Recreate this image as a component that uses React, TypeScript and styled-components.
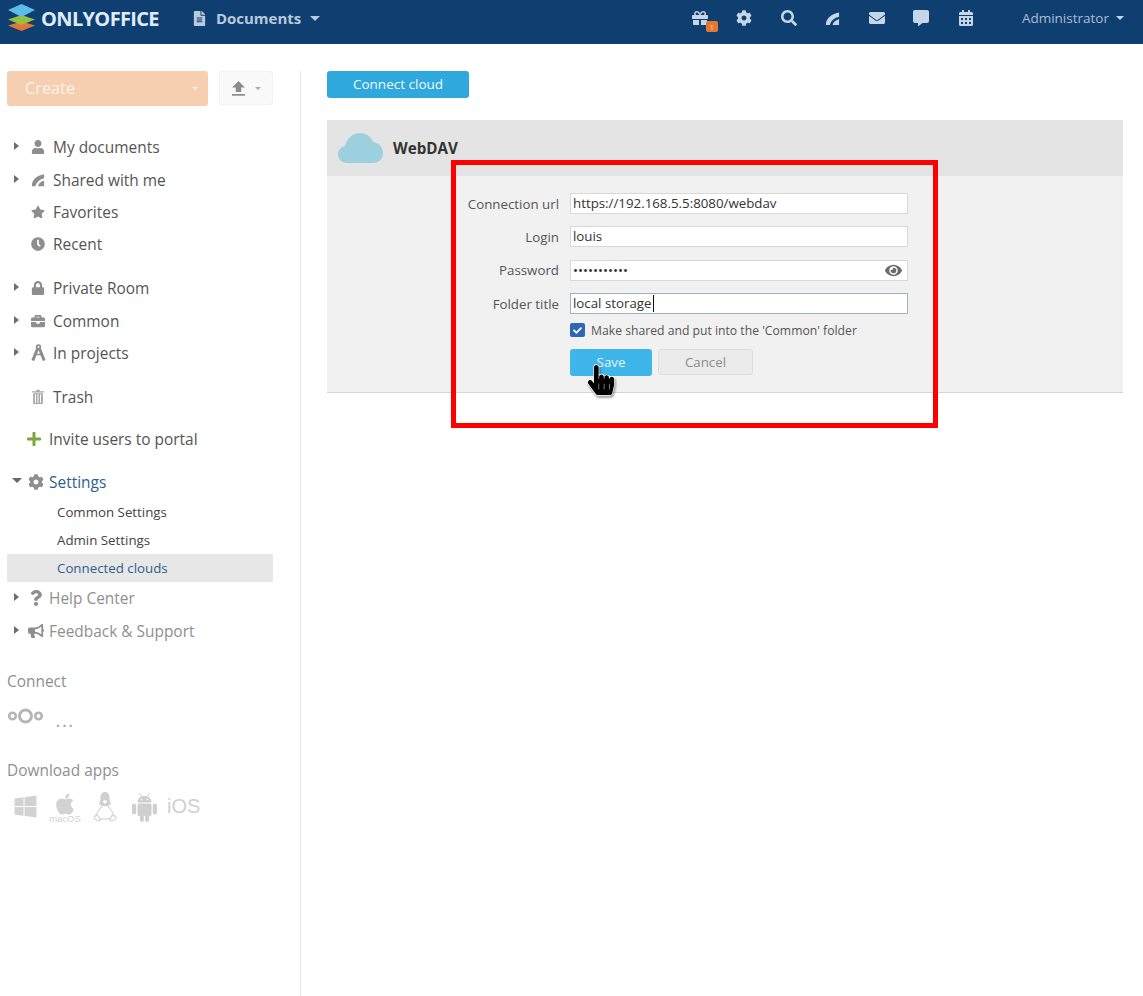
import React from "react";
import styled, { createGlobalStyle } from "styled-components";
import {
  FaGift, FaCog, FaSearch, FaEnvelope, FaCommentAlt, FaCalendarAlt, FaUser, FaStar, FaClock, FaLock,
  FaBriefcase, FaPlus, FaQuestion, FaBullhorn, FaWindows, FaApple, FaEye, FaFileAlt,
  FaCheck, FaHandPointer,
} from "react-icons/fa";

const Global = createGlobalStyle`
  html, body { margin: 0; padding: 0; background: #fff; }
  body { font-family: "Open Sans", "Liberation Sans", sans-serif; overflow: hidden; }
  * { box-sizing: border-box; }
`;

const Page = styled.div`
  position: relative;
  width: 1143px;
  height: 996px;
  display: flex;
  flex-direction: column;
  overflow: hidden;
`;

const Header = styled.header`
  height: 44px;
  flex: none;
  background: #0f3f71;
  display: flex;
  align-items: center;
  padding: 0 19px 0 7px;
`;
const LogoMark = styled.svg`
  width: 29px;
  height: 27px;
  flex: none;
  margin-top: -9px;
`;
const Brand = styled.span`
  margin: -8px 0 0 5px;
  font-size: 20px;
  font-weight: 700;
  letter-spacing: -0.65px;
  color: #dfecf8;
`;
const ModuleMenu = styled.div`
  display: flex;
  align-items: center;
  margin: -8px 0 0 33px;
  color: #b9cadd;
  font-size: 15px;
  font-weight: 700;
  gap: 9px;
  svg { font-size: 15px; }
`;
const DownArrow = styled.i<{ $size?: number; $color?: string }>`
  display: inline-block;
  width: 0;
  height: 0;
  border-left: ${p => p.$size ?? 5}px solid transparent;
  border-right: ${p => p.$size ?? 5}px solid transparent;
  border-top: ${p => p.$size ?? 5}px solid ${p => p.$color ?? "#b9cadd"};
`;
const HeaderIcons = styled.nav`
  margin-left: auto;
  display: flex;
  align-items: center;
  margin-top: -8px;
`;
const HeaderIcon = styled.span`
  position: relative;
  width: 44.3px;
  display: flex;
  justify-content: center;
  color: #c5d6e8;
  font-size: 16px;
`;
const Badge = styled.b`
  position: absolute;
  left: 28px;
  top: 11px;
  width: 12px;
  height: 11px;
  background: #e8772e;
  border-radius: 2px;
  color: #fbd9bd;
  font-size: 8px;
  line-height: 11px;
  font-weight: 400;
  text-align: center;
`;
const UserMenu = styled.div`
  margin-left: 34px;
  display: flex;
  align-items: center;
  gap: 7px;
  font-size: 13.5px;
  color: #a9bdd3;
`;

const Body = styled.div`
  flex: 1;
  display: flex;
  margin-top: 27px;
`;
const Sidebar = styled.aside`
  width: 301px;
  flex: none;
  border-right: 1px solid #e6e6e6;
  padding-left: 7px;
  padding-right: 27px;
`;
const ActionRow = styled.div`
  display: flex;
  gap: 11px;
  margin-bottom: 25px;
`;
const CreateButton = styled.div`
  width: 201px;
  height: 35px;
  background: #f6cfb1;
  border-radius: 3px;
  color: #fdf3ea;
  font-size: 16.3px;
  line-height: 33px;
  padding: 0 10px 0 18px;
  display: flex;
  align-items: center;
  justify-content: space-between;
`;
const UploadButton = styled.div`
  width: 54px;
  height: 34px;
  background: #f9f9f9;
  border: 1px solid #f2f2f2;
  border-radius: 3px;
  display: flex;
  align-items: center;
  justify-content: center;
  gap: 9px;
  svg { display: block; }
`;
const Group = styled.div<{ $gap?: number }>`
  margin-bottom: ${p => p.$gap ?? 0}px;
`;
const Row = styled.div<{ $dim?: boolean; $active?: boolean; $after?: number }>`
  height: 32.4px;
  margin-bottom: ${p => p.$after ?? 0}px;
  display: flex;
  align-items: center;
  font-size: 15.45px;
  color: ${p => (p.$active ? "#2f5f8f" : p.$dim ? "#8f8f8f" : "#555")};
`;
const CaretSlot = styled.span`
  width: 18px;
  flex: none;
  display: flex;
  padding-left: 7px;
`;
const RightCaret = styled.i`
  width: 0;
  height: 0;
  border-top: 4px solid transparent;
  border-bottom: 4px solid transparent;
  border-left: 5px solid #6e6e6e;
  margin-top: -2px;
`;
const OpenCaret = styled.i`
  width: 0;
  height: 0;
  margin: -3px 0 0 -2px;
  border-left: 5px solid transparent;
  border-right: 5px solid transparent;
  border-top: 5px solid #666;
`;
const IconSlot = styled.span<{ $compact?: boolean }>`
  width: ${p => (p.$compact ? 21 : 26)}px;
  margin-right: ${p => (p.$compact ? 3 : 2)}px;
  flex: none;
  display: flex;
  justify-content: center;
  font-size: ${p => (p.$compact ? 16 : 14)}px;
  color: #8e8e8e;
`;
const PlusSlot = styled.span`
  width: 17px;
  margin-right: 7px;
  flex: none;
  display: flex;
  justify-content: center;
  font-size: 16px;
  color: #7aa63a;
`;
const SubRow = styled.div<{ $active?: boolean }>`
  height: 28px;
  padding-left: 50px;
  font-size: 13.3px;
  line-height: 28px;
  color: ${p => (p.$active ? "#2f5f8f" : "#444")};
  background: ${p => (p.$active ? "#e7e7e7" : "transparent")};
`;
const SectionTitle = styled.div`
  font-size: 15.45px;
  line-height: 20px;
  color: #8f8f8f;
`;
const ConnectRow = styled.div`
  display: flex;
  align-items: flex-start;
  height: 53px;
  margin-top: 16px;
  gap: 13px;
  padding-left: 1px;
`;
const Dots = styled.span`
  color: #aaa;
  font-size: 14px;
  font-weight: 700;
  letter-spacing: 2.4px;
  line-height: 16px;
  margin-top: 7px;
`;
const AppsRow = styled.div`
  display: flex;
  align-items: center;
  margin: 10px 0 0 6px;
  height: 34px;
  color: #d2d2d2;
  font-size: 25px;
  gap: 15px;
`;
const AppleMark = styled.span`
  display: flex;
  flex-direction: column;
  align-items: center;
  font-size: 24px;
  width: 32px;
  margin: 1px -3px 0 -4px;
`;
const MacLabel = styled.span`
  font-family: "Liberation Sans", sans-serif;
  font-size: 9.5px;
  line-height: 9px;
  margin-top: -2px;
`;
const IosLabel = styled.span`
  font-family: "Liberation Sans", sans-serif;
  font-size: 20px;
  color: #d0d0d0;
  margin-left: -5px;
`;

const Content = styled.main`
  flex: 1;
  padding: 0 20px 0 26px;
`;
const ConnectButton = styled.div`
  width: 142px;
  height: 27px;
  background: #2fa8dd;
  border-radius: 3px;
  color: #eef8fd;
  font-size: 13.5px;
  line-height: 26px;
  text-align: center;
  margin-bottom: 22px;
`;
const Panel = styled.section`
  background: #f1f1f1;
  border-bottom: 1px solid #d4d4d4;
  height: 273px;
`;
const PanelHead = styled.div`
  height: 56px;
  background: #e4e4e4;
  display: flex;
  align-items: center;
  padding-left: 11px;
  gap: 10px;
`;
const PanelTitle = styled.h2`
  margin: 0;
  font-size: 15.2px;
  font-weight: 700;
  color: #333;
`;
const Form = styled.div`
  padding-top: 17px;
  margin-left: 140px;
  width: 441px;
`;
const FormRow = styled.div`
  display: grid;
  grid-template-columns: 92px 338px;
  column-gap: 11px;
  align-items: center;
  height: 21px;
  margin-bottom: 12.35px;
`;
const Label = styled.label`
  font-size: 13.3px;
  color: #555;
  text-align: right;
  white-space: nowrap;
`;
const Field = styled.div<{ $focused?: boolean }>`
  position: relative;
  height: 21px;
  background: #fff;
  border: 1px solid ${p => (p.$focused ? "#9db4c4" : "#d8d8d8")};
  padding: 0 2px;
  font-size: 13.3px;
  line-height: 19px;
  color: #333;
  display: flex;
  align-items: center;
`;
const TextCaret = styled.i`
  width: 1.5px;
  height: 17px;
  background: #111;
  margin-left: 1px;
`;
const EyeIcon = styled.span`
  margin-left: auto;
  margin-right: 3px;
  display: flex;
  color: #6b6b6b;
  font-size: 17px;
`;
const Checks = styled.div`
  display: flex;
  align-items: center;
  gap: 6px;
  margin: -3px 0 0 103px;
  font-size: 12.2px;
  color: #555;
  height: 14px;
`;
const CheckBox = styled.span`
  width: 15px;
  height: 14px;
  border-radius: 2px;
  background: #2e67b5;
  color: #fff;
  font-size: 9px;
  display: flex;
  align-items: center;
  justify-content: center;
`;
const Buttons = styled.div`
  display: flex;
  gap: 6px;
  margin: 12px 0 0 103px;
`;
const SaveButton = styled.div`
  position: relative;
  width: 82px;
  height: 27px;
  background: #3eb6e9;
  border-radius: 3px;
  color: #e3f4fb;
  font-size: 13.3px;
  line-height: 27px;
  text-align: center;
`;
const CancelButton = styled.div`
  width: 95px;
  height: 26px;
  background: #ebebeb;
  border: 1px solid #dcdcdc;
  border-radius: 3px;
  color: #8b8b8b;
  font-size: 13.3px;
  line-height: 24px;
  text-align: center;
`;
const HandCursor = styled.span`
  position: absolute;
  left: 16px;
  top: 16px;
  display: flex;
  font-size: 30px;
  color: #000;
  filter: drop-shadow(1px 2px 1px rgba(0, 0, 0, 0.4));
  svg { stroke: #fff; stroke-width: 22px; paint-order: stroke; overflow: visible; }
`;
const RedFrame = styled.div`
  position: absolute;
  left: 451px;
  top: 160px;
  width: 487px;
  height: 268px;
  border: 5px solid #ff0000;
  pointer-events: none;
`;

const FeedIcon = ({ size = 16 }: { size?: number }) => (
  <svg width={size} height={size} viewBox="0 0 16 16" fill="currentColor">
    <path d="M1 15C1 8 6 3 15 1.5V6C10 7 6.5 10 5 15Z" />
    <path d="M8 15C8.5 12 11 10 15 8.5V15Z" />
  </svg>
);
const CompassIcon = () => (
  <svg width="15" height="17" viewBox="0 0 15 17" fill="none" stroke="currentColor">
    <circle cx="7.5" cy="3" r="1.8" strokeWidth="1.8" />
    <path d="M6.4 5 1.8 16.5M8.6 5 13.2 16.5" strokeWidth="3" />
    <path d="M4.5 10.5h6" strokeWidth="1.5" />
  </svg>
);
const TrashIcon = () => (
  <svg width="14" height="15" viewBox="0 0 13 14" fill="#a5a5a5">
    <path d="M1 2h4V.8h3V2h4v1.2H1z" />
    <path d="M2 4h9v10H2zM3.6 5v8h1V5zM6 5v8h1V5zM8.4 5v8h1V5z" fillRule="evenodd" />
  </svg>
);
const Logo = () => (
  <LogoMark viewBox="0 0 29 27">
    <path d="M14.5 17.5 28 21.5 14.5 27 1 21.5Z" fill="#e8733a" />
    <path d="M14.5 11 28 15.5 14.5 21 1 15.5Z" fill="#95c13d" />
    <path d="M14.5 0 28 6 14.5 13 1 6Z" fill="#5dbde8" />
  </LogoMark>
);
const Cloud = () => (
  <svg width="45" height="30" viewBox="0 0 45 30" fill="#9dd0de">
    <path d="M9 30C4 30 0 26 0 21.5 0 17 3 14 7 13 8 7 14 0 22 0c6 0 11 3.5 13 9 6 .5 10 5.5 10 11 0 5.5-4 10-10 10Z" />
  </svg>
);
const UploadGlyph = () => (
  <svg width="15" height="15" viewBox="0 0 15 15" fill="#8c8c8c">
    <path d="M7.5 0 14 6.5H10.2V11H4.8V6.5H1Z" />
    <path d="M1 13h13v1.7H1z" />
  </svg>
);
const NextcloudLogo = () => (
  <svg width="35" height="18" viewBox="0 0 35 18" fill="none" stroke="#b5b5b5">
    <circle cx="4.5" cy="9" r="3.3" strokeWidth="2.6" />
    <circle cx="17.5" cy="9" r="6" strokeWidth="3" />
    <circle cx="30.5" cy="9" r="3.3" strokeWidth="2.6" />
  </svg>
);
const TuxIcon = () => (
  <svg width="24" height="30" viewBox="0 0 24 30">
    <path d="M12 11C8 14 3 22 2.5 25M12 11c4 3 9 11 9.5 14M6 26c2 1.5 9 1.5 12 0" fill="none" stroke="#d6d6d6" strokeWidth="1.2" />
    <path d="M12 0C8.5 0 7.5 3 7.5 6c0 2-.7 4-1.5 6 2 1.5 4 2 6 2s4-.5 6-2c-.8-2-1.5-4-1.5-6 0-3-1-6-4.5-6Z" fill="#cfcfcf" />
    <path d="M9.5 9.5 12 8l2.5 1.5L12 12Z" fill="#fff" />
    <path d="M1 26c0-2 2-3 3.5-3 1 1.5 2.5 3.5 3 5-1.5 1.5-5.5 0-6.5-2ZM23 26c0-2-2-3-3.5-3-1 1.5-2.5 3.5-3 5 1.500 1.500 5.500 0 6.500-2Z" fill="none" stroke="#d6d6d6" strokeWidth="1.2" />
  </svg>
);
const AndroidIcon = () => (
  <svg width="25" height="30" viewBox="0 0 25 30" fill="#cfcfcf">
    <path d="M5.5 10.5C5.5 6.5 8.5 4 12.5 4s7 2.5 7 6.5Z" />
    <path d="M7.5 1l2.5 4M17.5 1 15 5" stroke="#cfcfcf" strokeWidth="1" />
    <rect x="5.5" y="11.5" width="14" height="12.5" rx="1.5" />
    <rect x="0" y="11.5" width="4.2" height="11" rx="2.1" />
    <rect x="20.8" y="11.5" width="4.2" height="11" rx="2.1" />
    <rect x="8" y="22" width="3.8" height="8" rx="1.9" />
    <rect x="13.2" y="22" width="3.8" height="8" rx="1.9" />
    <circle cx="9.5" cy="7.5" r=".8" fill="#fff" />
    <circle cx="15.5" cy="7.5" r=".8" fill="#fff" />
  </svg>
);

export default function App() {
  return (
    <Page>
      <Global />
      <Header>
        <Logo />
        <Brand>ONLYOFFICE</Brand>
        <ModuleMenu>
          <FaFileAlt />
          <span>Documents</span>
          <DownArrow $size={5.5} />
        </ModuleMenu>
        <HeaderIcons>
          <HeaderIcon><FaGift /><Badge>1</Badge></HeaderIcon>
          <HeaderIcon><FaCog /></HeaderIcon>
          <HeaderIcon><FaSearch /></HeaderIcon>
          <HeaderIcon><FeedIcon size={15} /></HeaderIcon>
          <HeaderIcon><FaEnvelope /></HeaderIcon>
          <HeaderIcon><FaCommentAlt /></HeaderIcon>
          <HeaderIcon><FaCalendarAlt /></HeaderIcon>
          <UserMenu>
            <span>Administrator</span>
            <DownArrow $size={4.5} $color="#c5d6e8" />
          </UserMenu>
        </HeaderIcons>
      </Header>
      <Body>
        <Sidebar>
          <ActionRow>
            <CreateButton>
              <span>Create</span>
              <DownArrow $size={3.5} $color="#fdf3ea" />
            </CreateButton>
            <UploadButton>
              <UploadGlyph />
              <DownArrow $size={3.5} $color="#aaa" />
            </UploadButton>
          </ActionRow>
          <Group $gap={11.4}>
            <Row><CaretSlot><RightCaret /></CaretSlot><IconSlot><FaUser /></IconSlot>My documents</Row>
            <Row><CaretSlot><RightCaret /></CaretSlot><IconSlot><FeedIcon size={14} /></IconSlot>Shared with me</Row>
            <Row><CaretSlot /><IconSlot><FaStar /></IconSlot>Favorites</Row>
            <Row><CaretSlot /><IconSlot><FaClock /></IconSlot>Recent</Row>
          </Group>
          <Group $gap={11.6}>
            <Row><CaretSlot><RightCaret /></CaretSlot><IconSlot><FaLock /></IconSlot>Private Room</Row>
            <Row $after={-0.4}><CaretSlot><RightCaret /></CaretSlot><IconSlot><FaBriefcase /></IconSlot>Common</Row>
            <Row><CaretSlot><RightCaret /></CaretSlot><IconSlot><CompassIcon /></IconSlot>In projects</Row>
          </Group>
          <Group $gap={9.6}>
            <Row><CaretSlot /><IconSlot><TrashIcon /></IconSlot>Trash</Row>
          </Group>
          <Group $gap={10.7}>
            <Row><CaretSlot /><PlusSlot><FaPlus /></PlusSlot>Invite users to portal</Row>
          </Group>
          <Row $active><CaretSlot><OpenCaret /></CaretSlot><IconSlot $compact><FaCog /></IconSlot>Settings</Row>
          <SubRow>Common Settings</SubRow>
          <SubRow>Admin Settings</SubRow>
          <SubRow $active>Connected clouds</SubRow>
          <Group $gap={23.2}>
            <Row $dim $after={1}><CaretSlot><RightCaret /></CaretSlot><IconSlot $compact><FaQuestion /></IconSlot>Help Center</Row>
            <Row $dim><CaretSlot><RightCaret /></CaretSlot><IconSlot $compact><FaBullhorn /></IconSlot>Feedback &amp; Support</Row>
          </Group>
          <SectionTitle>Connect</SectionTitle>
          <ConnectRow>
            <NextcloudLogo />
            <Dots>...</Dots>
          </ConnectRow>
          <SectionTitle>Download apps</SectionTitle>
          <AppsRow>
            <FaWindows />
            <AppleMark><FaApple /><MacLabel>macOS</MacLabel></AppleMark>
            <TuxIcon />
            <AndroidIcon />
            <IosLabel>iOS</IosLabel>
          </AppsRow>
        </Sidebar>
        <Content>
          <ConnectButton>Connect cloud</ConnectButton>
          <Panel>
            <PanelHead>
              <Cloud />
              <PanelTitle>WebDAV</PanelTitle>
            </PanelHead>
            <Form>
              <FormRow>
                <Label>Connection url</Label>
                <Field>https://192.168.5.5:8080/webdav</Field>
              </FormRow>
              <FormRow>
                <Label>Login</Label>
                <Field>louis</Field>
              </FormRow>
              <FormRow>
                <Label>Password</Label>
                <Field>•••••••••••<EyeIcon><FaEye /></EyeIcon></Field>
              </FormRow>
              <FormRow>
                <Label>Folder title</Label>
                <Field $focused>local storage<TextCaret /></Field>
              </FormRow>
              <Checks>
                <CheckBox><FaCheck /></CheckBox>
                <span>Make shared and put into the 'Common' folder</span>
              </Checks>
              <Buttons>
                <SaveButton>
                  Save
                  <HandCursor><FaHandPointer /></HandCursor>
                </SaveButton>
                <CancelButton>Cancel</CancelButton>
              </Buttons>
            </Form>
          </Panel>
        </Content>
      </Body>
      <RedFrame />
    </Page>
  );
}
